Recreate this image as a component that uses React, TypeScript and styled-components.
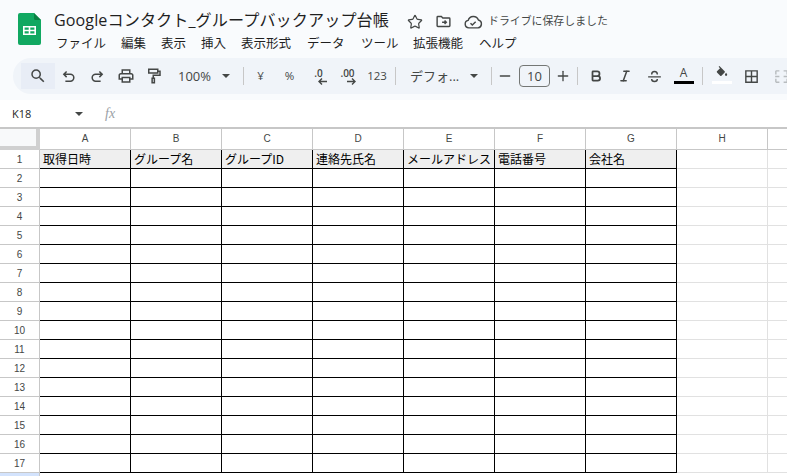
import React from "react";
import styled, { createGlobalStyle } from "styled-components";
import { Bold, Italic, Minus, Plus, Star } from "lucide-react";

const Global = createGlobalStyle`
  html, body { margin: 0; padding: 0; height: 100%; background: #f9fbfd; }
  #root { height: 100%; }
  * { box-sizing: border-box; }
`;

const UI = `"Open Sans", "Noto Sans CJK JP", sans-serif`;
const JP = `Roboto, "Noto Sans CJK JP", sans-serif`;

const Page = styled.div`
  width: 787px;
  height: 476px;
  overflow: hidden;
  display: flex;
  flex-direction: column;
  background: #f9fbfd;
  font-family: ${JP};
  color: #444746;
`;

const Header = styled.header`
  height: 58px;
  flex: none;
  display: flex;
  padding: 13px 0 0 18px;
`;

const LogoSvg = styled.svg`
  flex: none;
  width: 23px;
  height: 32px;
`;

const TitleColumn = styled.div`
  margin-left: 13px;
  margin-top: -5px;
  display: flex;
  flex-direction: column;
`;

const TitleRow = styled.div`
  display: flex;
  align-items: center;
  height: 24px;
`;

const Title = styled.h1`
  margin: 0;
  font: 400 16.1px/22px ${UI};
  letter-spacing: 0.1px;
  color: #1f1f1f;
  width: 347px;
  white-space: nowrap;
`;

const TitleIcon = styled.span<{ $w: number }>`
  display: flex;
  align-items: center;
  justify-content: center;
  width: ${(p) => p.$w}px;
  height: 24px;
  padding-top: 3px;
  color: #444746;
`;

const Saved = styled.span`
  margin-left: -1px;
  font: 400 10.9px/24px ${JP};
  padding-top: 4px;
  color: #444746;
  white-space: nowrap;
`;

const Menu = styled.nav`
  display: flex;
  margin-top: 2px;
  height: 20px;
  margin-left: 2px;
`;

const MenuItem = styled.span<{ $w: number }>`
  width: ${(p) => p.$w}px;
  font: 400 12.5px/20px ${JP};
  color: #1f1f1f;
  white-space: nowrap;
`;

const Toolbar = styled.div`
  flex: none;
  height: 36px;
  margin-left: 13px;
  width: 800px;
  display: flex;
  align-items: center;
  padding-left: 8px;
  background: #f0f4f9;
  border-radius: 18px 0 0 18px;
`;

const Tool = styled.div<{ $w: number; $active?: boolean }>`
  flex: none;
  width: ${(p) => p.$w}px;
  height: 26px;
  display: flex;
  align-items: center;
  justify-content: center;
  background: ${(p) => (p.$active ? "#e8edf6" : "transparent")};
  color: #444746;
`;

const ToolText = styled(Tool)`
  font: 400 13px/26px ${UI};
  justify-content: flex-start;
  white-space: nowrap;
`;

const ZoomValue = styled.span`
  margin-left: 10px;
`;

const SmallSymbol = styled(Tool)`
  font: 400 11.5px/26px ${UI};
`;

const Decimal = styled(Tool)`
  flex-direction: column;
  align-items: center;
  font: 600 10px/10px ${UI};
  & > svg {
    margin-left: 8px;
  }
`;

const Caret = styled.span<{ $left: number }>`
  flex: none;
  margin-left: ${(p) => p.$left}px;
  width: 0;
  height: 0;
  border-left: 4px solid transparent;
  border-right: 4px solid transparent;
  border-top: 4px solid #444746;
`;

const Divider = styled.span<{ $mx: number; $mr?: number }>`
  flex: none;
  width: 1px;
  height: 18px;
  margin-left: ${(p) => p.$mx}px;
  margin-right: ${(p) => p.$mr ?? p.$mx}px;
  background: #c7c7c7;
`;

const SizeBox = styled.div`
  flex: none;
  width: 31px;
  height: 22px;
  margin-left: 4px;
  border: 1px solid #747775;
  border-radius: 4px;
  text-align: center;
  font: 400 13px/20px ${UI};
  color: #444746;
`;

const ColorTool = styled(Tool)`
  flex-direction: column;
  justify-content: flex-start;
  padding-top: 3px;
  font: 400 12px/14px ${UI};
`;

const ColorBar = styled.span<{ $c: string }>`
  flex: none;
  width: 20px;
  height: 3px;
  margin-top: 1px;
  background: ${(p) => p.$c};
`;

const Muted = styled.span`
  display: flex;
  color: #b8bcbf;
`;

const FormulaBar = styled.div`
  flex: none;
  margin-top: 6px;
  height: 27px;
  background: #fff;
  display: flex;
  align-items: center;
`;

const NameBox = styled.div`
  width: 95px;
  height: 27px;
  display: flex;
  align-items: center;
  padding-left: 12px;
  font: 400 11px/27px ${UI};
  color: #1f1f1f;
`;

const NameText = styled.span`
  width: 63px;
`;

const Fx = styled.span`
  margin-left: 10px;
  font: italic 400 14px/27px "Liberation Serif", serif;
  color: #9aa0a6;
`;

const Sheet = styled.div`
  flex: 1;
  min-height: 0;
  width: 859px;
  background: #fff;
  border-top: 2px solid #c7c7c7;
  display: grid;
  grid-template-columns: 40px repeat(9, 91px);
  grid-auto-rows: 19px;
  grid-template-rows: 21px;
  align-content: start;
  overflow: hidden;
`;

const Corner = styled.div`
  background: #f8f9fa;
  border-right: 4px solid #d0d0d0;
  border-bottom: 4px solid #d0d0d0;
`;

const ColHead = styled.div`
  background: #fff;
  border-right: 1px solid #c7c7c7;
  border-bottom: 1px solid #c7c7c7;
  text-align: center;
  font: 400 10px/20px "Liberation Sans", sans-serif;
  color: #444746;
`;

const RowHead = styled.div<{ $sel?: boolean }>`
  background: ${(p) => (p.$sel ? "#d3e3fd" : "#fff")};
  border-right: 1px solid #c7c7c7;
  border-bottom: 1px solid #c7c7c7;
  text-align: center;
  font: 400 10px/20px "Liberation Sans", sans-serif;
  color: #444746;
`;

const Cell = styled.div<{ $boxed: boolean; $head?: boolean }>`
  background: ${(p) => (p.$head ? "#efefef" : "#fff")};
  border-right: 1px solid ${(p) => (p.$boxed ? "#000" : "#e1e1e1")};
  border-bottom: 1px solid ${(p) => (p.$boxed ? "#000" : "#e1e1e1")};
  padding-left: 3px;
  font: 400 12px/18px "Noto Sans CJK JP", sans-serif;
  color: #000;
  white-space: nowrap;
  overflow: hidden;
`;

const Logo = () => (
  <LogoSvg viewBox="0 0 23 32">
    <path d="M2 0h14l7 7v23a2 2 0 0 1-2 2H2a2 2 0 0 1-2-2V2a2 2 0 0 1 2-2z" fill="#11a861" />
    <path d="M16 0l7 7h-5.500A1.500 1.500 0 0 1 16 5.500z" fill="#0b8043" />
    <path d="M5 13h13v9H5z M6.600 14.600v2.200h4.100v-2.200z M12.300 14.600v2.200h4.100v-2.200z M6.600 18.200v2.200h4.100v-2.200z M12.300 18.200v2.200h4.100v-2.200z" fill="#fff" fillRule="evenodd" />
  </LogoSvg>
);

const Ico = ({ children, size = 18, fill = "none", sw = 2 }: { children: React.ReactNode; size?: number; fill?: string; sw?: number }) => (
  <svg width={size} height={size} viewBox="0 0 24 24" fill={fill} stroke={fill === "none" ? "currentColor" : "none"} strokeWidth={sw}>
    {children}
  </svg>
);

const menus: [string, number][] = [
  ["ファイル", 65], ["編集", 40], ["表示", 40], ["挿入", 40], ["表示形式", 66],
  ["データ", 54], ["ツール", 52], ["拡張機能", 66], ["ヘルプ", 40],
];

const cols = ["A", "B", "C", "D", "E", "F", "G", "H"];
const heads = ["取得日時", "グループ名", "グループID", "連絡先氏名", "メールアドレス", "電話番号", "会社名", ""];
const rows = Array.from({ length: 16 }, (_, i) => i + 2);

export default function App() {
  return (
    <Page>
      <Global />
      <Header>
        <Logo />
        <TitleColumn>
          <TitleRow>
            <Title>Googleコンタクト_グループバックアップ台帳</Title>
            <TitleIcon $w={28}><Star size={16} strokeWidth={1.8} /></TitleIcon>
            <TitleIcon $w={28}>
              <Ico size={17}>
                <path d="M3 6a1 1 0 0 1 1-1h5l2 2h9a1 1 0 0 1 1 1v10a1 1 0 0 1-1 1H4a1 1 0 0 1-1-1z" />
                <path d="M10 13h6M13.500 10.500 16 13l-2.500 2.500" />
              </Ico>
            </TitleIcon>
            <TitleIcon $w={32}>
              <Ico size={20} sw={1.7}>
                <path d="M7 19a4.500 4.500 0 0 1-.8-8.900A6.500 6.500 0 0 1 18.500 9.600 4.800 4.800 0 0 1 18 19z" />
                <path d="m9 13.500 2.200 2.200 4-4" />
              </Ico>
            </TitleIcon>
            <Saved>ドライブに保存しました</Saved>
          </TitleRow>
          <Menu>
            {menus.map(([m, w]) => <MenuItem key={m} $w={w}>{m}</MenuItem>)}
          </Menu>
        </TitleColumn>
      </Header>

      <Toolbar>
        <Tool $w={34} $active>
          <Ico size={18} fill="currentColor"><path d="M15.500 14h-.79l-.28-.27A6.471 6.471 0 0 0 16 9.500 6.500 6.500 0 1 0 9.500 16c1.610 0 3.090-.59 4.230-1.570l.27.28v.79l5 4.990L20.490 19l-4.990-5zm-6 0C7.010 14 5 11.990 5 9.500S7.010 5 9.500 5 14 7.010 14 9.500 11.990 14 9.500 14z" /></Ico>
        </Tool>
        <Tool $w={27}>
          <Ico size={15} sw={2.4}><path d="M9 4 4.500 8.500 9 13M4.500 8.500H15a5.500 5.500 0 0 1 0 11H7" /></Ico>
        </Tool>
        <Tool $w={30}>
          <Ico size={15} sw={2.4}><path d="M15 4l4.500 4.500L15 13M19.500 8.500H9a5.500 5.500 0 0 0 0 11h8" /></Ico>
        </Tool>
        <Tool $w={28}>
          <Ico size={18} fill="currentColor"><path d="M19 8h-1V3H6v5H5c-1.660 0-3 1.340-3 3v6h4v4h12v-4h4v-6c0-1.660-1.340-3-3-3zM8 5h8v3H8V5zm8 14H8v-4h8v4zm4-4h-2v-2H6v2H4v-4c0-.55.45-1 1-1h14c.55 0 1 .45 1 1v4z" /></Ico>
        </Tool>
        <Tool $w={28}>
          <Ico size={18} sw={2}><path d="M5 3h12v5H5zM17 5.500h3V11H11v4M9.500 15h3v6h-3z" /></Ico>
        </Tool>
        <ToolText $w={70}>
          <ZoomValue>100%</ZoomValue>
          <Caret $left={11} />
        </ToolText>
        <Divider $mx={5} $mr={2} />
        <SmallSymbol $w={29}>¥</SmallSymbol>
        <SmallSymbol $w={29}>%</SmallSymbol>
        <Decimal $w={29}>
          .0
          <svg width="9" height="7" viewBox="0 0 9 7" fill="none" stroke="currentColor" strokeWidth="1.400"><path d="M9 3.500H1M4 .5l-3 3 3 3" /></svg>
        </Decimal>
        <Decimal $w={29}>
          .00
          <svg width="9" height="7" viewBox="0 0 9 7" fill="none" stroke="currentColor" strokeWidth="1.400"><path d="M0 3.500h8M5 .5l3 3-3 3" /></svg>
        </Decimal>
        <SmallSymbol $w={30}>123</SmallSymbol>
        <Divider $mx={3} $mr={14} />
        <ToolText $w={60}>デフォ...</ToolText>
        <Caret $left={0} />
        <Divider $mx={13} $mr={3} />
        <Tool $w={20}><Minus size={16} strokeWidth={2} /></Tool>
        <SizeBox>10</SizeBox>
        <Tool $w={26}><Plus size={16} strokeWidth={2} /></Tool>
        <Divider $mx={1} $mr={3} />
        <Tool $w={29}><Bold size={14} strokeWidth={3} /></Tool>
        <Tool $w={29}><Italic size={14} strokeWidth={2.6} /></Tool>
        <Tool $w={30}>
          <Ico size={17} sw={2}><path d="M8 9c0-2.200 1.800-4 4-4s4 1.800 4 4M3 12.500h18M16 15.500c0 2-1.800 3.500-4 3.500s-4-1.500-4-3.500" /></Ico>
        </Tool>
        <ColorTool $w={29}>A<ColorBar $c="#000" /></ColorTool>
        <Divider $mx={4} $mr={4} />
        <ColorTool $w={29}>
          <Ico size={14} fill="currentColor"><path d="M16.560 8.940 7.620 0 6.210 1.410l2.380 2.380-5.150 5.150a1.490 1.490 0 0 0 0 2.120l5.500 5.500c.29.29.68.44 1.060.44s.77-.15 1.060-.44l5.500-5.500c.59-.58.59-1.530 0-2.120zM19 11.500s-2 2.170-2 3.500a2 2 0 1 0 4 0c0-1.330-2-3.500-2-3.500z" /></Ico>
          <ColorBar $c="#fff" />
        </ColorTool>
        <Tool $w={30}>
          <Ico size={17} sw={2}><path d="M4 4h16v16H4zM12 4v16M4 12h16" /></Ico>
        </Tool>
        <Tool $w={30}>
          <Muted>
            <Ico size={17} sw={2}><path d="M4 4h5M4 20h5M4 4v5M4 15v5M20 4h-5M20 20h-5M20 4v5M20 15v5M3 12h6M21 12h-6" /></Ico>
          </Muted>
        </Tool>
      </Toolbar>

      <FormulaBar>
        <NameBox>
          <NameText>K18</NameText>
          <Caret $left={0} />
        </NameBox>
        <Fx>fx</Fx>
      </FormulaBar>

      <Sheet>
        <Corner />
        {cols.map((c) => <ColHead key={c}>{c}</ColHead>)}
        <ColHead />
        <RowHead>1</RowHead>
        {heads.map((h, i) => <Cell key={i} $boxed={i < 7} $head={i < 7}>{h}</Cell>)}
        <Cell $boxed={false} />
        {rows.map((r) => (
          <React.Fragment key={r}>
            <RowHead>{r}</RowHead>
            {cols.map((c, i) => <Cell key={c} $boxed={i < 7} />)}
            <Cell $boxed={false} />
          </React.Fragment>
        ))}
        <RowHead $sel />
      </Sheet>
    </Page>
  );
}
